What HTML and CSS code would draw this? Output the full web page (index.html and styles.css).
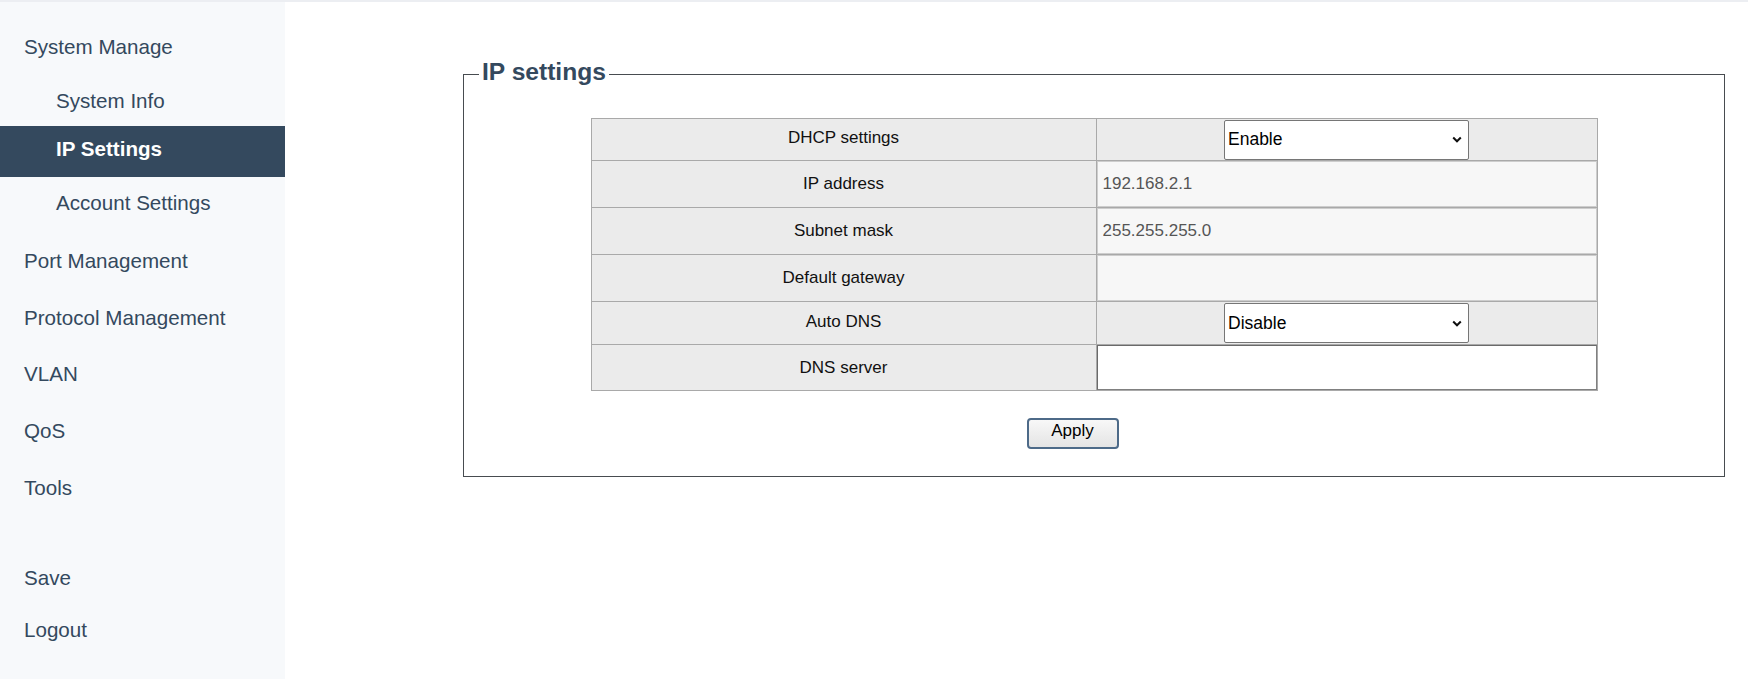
FILE: index.html
```html
<!DOCTYPE html>
<html lang="en">
<head>
<meta charset="utf-8">
<title>IP settings</title>
<link rel="stylesheet" href="styles.css">
</head>
<body>
<div class="topbar"></div>
<div class="layout">
  <aside class="sidebar">
    <nav class="menu">
      <a class="item">System Manage</a>
      <div class="sub">
        <a class="subitem">System Info</a>
        <a class="subitem active">IP Settings</a>
        <a class="subitem">Account Settings</a>
      </div>
      <a class="item">Port Management</a>
      <a class="item">Protocol Management</a>
      <a class="item">VLAN</a>
      <a class="item">QoS</a>
      <a class="item">Tools</a>
    </nav>
    <nav class="menu-bottom">
      <a class="item small">Save</a>
      <a class="item small">Logout</a>
    </nav>
  </aside>
  <main class="main">
    <fieldset class="panel">
      <legend class="panel-title">IP settings</legend>
      <table class="form-table">
        <tr class="r42 sel-row">
          <td class="label">DHCP settings</td>
          <td class="value center">
            <select class="sel"><option>Enable</option><option>Disable</option></select>
          </td>
        </tr>
        <tr>
          <td class="label">IP address</td>
          <td class="value"><input class="ro" type="text" value="192.168.2.1" readonly></td>
        </tr>
        <tr>
          <td class="label">Subnet mask</td>
          <td class="value"><input class="ro" type="text" value="255.255.255.0" readonly></td>
        </tr>
        <tr>
          <td class="label">Default gateway</td>
          <td class="value"><input class="ro" type="text" value="" readonly></td>
        </tr>
        <tr class="r43 sel-row">
          <td class="label">Auto DNS</td>
          <td class="value center">
            <select class="sel"><option>Disable</option><option>Enable</option></select>
          </td>
        </tr>
        <tr class="r46">
          <td class="label">DNS server</td>
          <td class="value"><input class="txt" type="text" value=""></td>
        </tr>
      </table>
      <div class="actions">
        <button class="btn" type="button">Apply</button>
      </div>
    </fieldset>
  </main>
</div>
</body>
</html>
```

FILE: styles.css
```css
* { box-sizing: border-box; }

html, body {
  margin: 0;
  padding: 0;
  background: #ffffff;
  font-family: "Liberation Sans", Arial, sans-serif;
  color: #111;
}

.topbar {
  height: 2px;
  background: #eceef2;
}

.layout {
  display: flex;
  height: calc(100vh - 2px);
}

.sidebar {
  width: 285px;
  flex: none;
  background: #f7f9fb;
  padding-top: 16px;
  display: flex;
  flex-direction: column;
}

.menu, .menu-bottom {
  display: flex;
  flex-direction: column;
}

.menu-bottom { margin-top: 35.5px; }

.item, .subitem {
  display: block;
  font-size: 20.6px;
  line-height: 23px;
  color: #34495e;
  text-decoration: none;
  cursor: pointer;
  white-space: nowrap;
}

.item { padding: 17px 0 16.75px 24px; }
.item.small { padding: 14.5px 0 14.5px 24px; }

.sub {
  display: flex;
  flex-direction: column;
  margin-bottom: 4px;
}

.subitem { padding: 14px 0 14px 56px; }

.subitem.active {
  padding: 11.5px 0 16.5px 56px;
  background: #34495e;
  color: #ffffff;
  font-weight: bold;
}

.main {
  flex: 1;
  padding: 56px 23px 0 178px;
}

.panel {
  margin: 0;
  border: 1px solid #474c50;
  padding: 28px 0 27px 0;
}

.panel-title {
  font-size: 24.6px;
  line-height: 28px;
  font-weight: bold;
  color: #34495e;
  padding: 0 3px 4px 3px;
  margin-left: 15px;
}

.form-table {
  width: 1007px;
  margin: 0 auto;
  border-collapse: collapse;
  font-size: 17px;
}

.form-table td {
  border: 1px solid #a9a9a9;
  padding: 0;
}

.form-table tr { height: 47px; }
.form-table tr.r42 { height: 42px; }
.form-table tr.r43 { height: 43px; }
.form-table tr.r46 { height: 46px; }

.label {
  width: 505px;
  background: #ebebeb;
  text-align: center;
  color: #111;
}

.sel-row .label { padding-bottom: 3px; }

.value {
  background: #ebebeb;
}

.value.center { text-align: center; }

.sel {
  width: 245px;
  height: 40px;
  font-family: "Liberation Sans", Arial, sans-serif;
  font-size: 17.5px;
  color: #000;
  padding: 0 24px 1px 3px;
  border: 1px solid #767676;
  border-radius: 2px;
  background-color: #fff;
  background-image: url("data:image/svg+xml,%3Csvg xmlns='http://www.w3.org/2000/svg' width='10' height='7' viewBox='0 0 10 7'%3E%3Cpath d='M1.2 1.5l3.8 3.8 3.8-3.8' fill='none' stroke='%23111' stroke-width='2'/%3E%3C/svg%3E");
  background-repeat: no-repeat;
  background-position: right 6px center;
  -webkit-appearance: none;
  appearance: none;
  vertical-align: middle;
}

.ro, .txt {
  display: block;
  width: 100%;
  height: 46px;
  margin: 0;
  font-family: "Liberation Sans", Arial, sans-serif;
  font-size: 17px;
  padding: 0 0 0 5px;
  outline: none;
}

.ro {
  background: #f7f7f7;
  border: 1px solid #cdcdcd;
  color: #555;
}

.txt {
  height: 45px;
  background: #fff;
  border: 1px solid #808080;
  border-top-color: #6a6a6a;
  border-left-color: #6a6a6a;
  color: #000;
}

.actions {
  width: 1007px;
  margin: 27px auto 0 auto;
  padding-left: 436px;
}

.btn {
  width: 92px;
  height: 31px;
  font-family: "Liberation Sans", Arial, sans-serif;
  font-size: 17px;
  color: #000;
  background: linear-gradient(#f8f8f8, #e4e4e4);
  border: 2px solid #4d6a88;
  border-radius: 4px;
  padding: 0 0 5px 0;
  cursor: pointer;
}
```
